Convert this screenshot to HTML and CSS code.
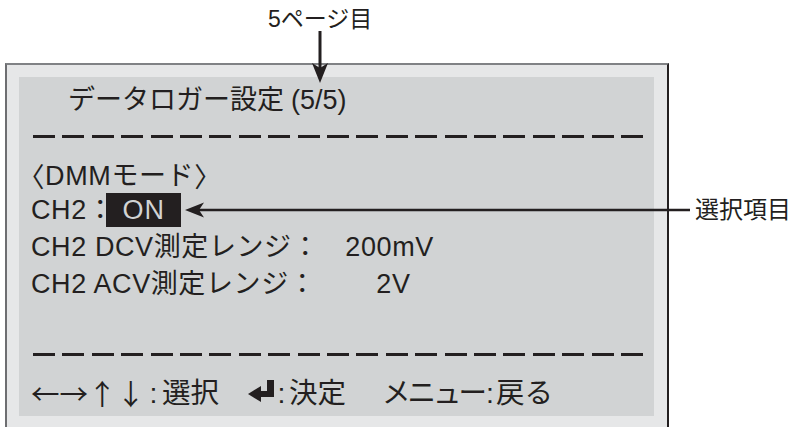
FILE: index.html
```html
<!DOCTYPE html>
<html lang="ja">
<head>
<meta charset="utf-8">
<title>データロガー設定</title>
<link rel="stylesheet" href="styles.css">
</head>
<body>
<div class="page">
  <div class="main">
    <div class="top-label">5ページ目</div>
    <div class="frame">
      <div class="lcd">
        <div class="title">データロガー設定<span class="paren">(5/5)</span></div>
        <div class="rule rule-top"><div class="dash"></div></div>
        <div class="row"><span class="br">〈</span>DMMモード<span class="br">〉</span></div>
        <div class="row row-sel">CH2<span class="fc">：</span><span class="sel">ON</span></div>
        <div class="row row-tall">CH2 DCV測定レンジ：<span class="val val-dc">200mV</span></div>
        <div class="row row-tall">CH2 ACV測定レンジ：<span class="val val-ac">2V</span></div>
        <div class="spacer"></div>
        <div class="rule rule-bottom"><div class="dash"></div></div>
        <div class="footer">
          <span class="arrows">←→↑↓</span><span class="col col1">:</span><span>選択</span>
          <svg class="enter" viewBox="0 0 26 22" width="26" height="22" aria-hidden="true">
            <rect x="19" y="0" width="7" height="17" fill="#231f20"/>
            <rect x="10" y="11" width="16" height="6" fill="#231f20"/>
            <path d="M0 14 L13 6 L13 22 Z" fill="#231f20"/>
          </svg>
          <span class="col col2">:</span><span>決定</span>
          <span class="menu">メニュー</span><span class="col col3">:</span><span>戻る</span>
        </div>
      </div>
    </div>
  </div>
  <div class="side">選択項目</div>
  <svg class="annot" viewBox="0 0 795 427" width="795" height="427" aria-hidden="true">
    <line x1="320" y1="31" x2="320" y2="70" stroke="#231f20" stroke-width="3"/>
    <path d="M320 83 L312 63 L320 68 L328 63 Z" fill="#231f20"/>
    <line x1="199" y1="210" x2="690" y2="210" stroke="#231f20" stroke-width="2.5"/>
    <path d="M185 210 L204 202.5 L199 210 L204 217.5 Z" fill="#231f20"/>
  </svg>
</div>
</body>
</html>
```

FILE: styles.css
```css
html, body {
  margin: 0;
  padding: 0;
  background: #ffffff;
}

body {
  font-family: "Liberation Sans", "Noto Sans CJK JP", sans-serif;
  color: #231f20;
  overflow: hidden;
}

.page {
  position: relative;
  width: 795px;
  height: 427px;
  display: flex;
  overflow: hidden;
}

.main {
  width: 669px;
  flex: none;
}

.top-label {
  height: 63px;
  line-height: 38px;
  font-size: 23px;
  padding-left: 268px;
  box-sizing: border-box;
  white-space: nowrap;
}

.frame {
  margin-left: 5px;
  width: 635px;
  padding: 12px 13px 11px 12px;
  background: #e6e7e8;
  border-left: 2px solid #6d6e71;
  border-top: 2px solid #808285;
  border-right: 2px solid #231f20;
}

.lcd {
  height: 339px;
  box-sizing: border-box;
  padding-top: 6px;
  background: #d1d3d4;
  display: flex;
  flex-direction: column;
  font-size: 27px;
}

.title {
  height: 34px;
  line-height: 34px;
  padding-left: 49px;
  white-space: nowrap;
}

.paren {
  margin-left: 7px;
}

.rule {
  padding-left: 14px;
}

.rule-top {
  padding-top: 18px;
  margin-bottom: 21px;
}

.rule-bottom {
  margin-bottom: 14px;
}

.dash {
  width: 610px;
  height: 3px;
  background: repeating-linear-gradient(to right, #231f20 0 22px, transparent 22px 29.4px);
}

.row {
  height: 34px;
  line-height: 34px;
  padding-left: 12px;
  display: flex;
  align-items: center;
  white-space: nowrap;
  letter-spacing: 0.6px;
  flex: none;
}

.row-sel {
  margin-bottom: 2px;
}

.row-tall {
  height: 37px;
  line-height: 37px;
}

.br {
  font-family: "Noto Sans CJK JP", sans-serif;
  font-feature-settings: "halt";
}

.fc {
  margin-right: -8px;
}

.sel {
  display: inline-block;
  height: 34px;
  line-height: 34px;
  padding: 0 16px 0 16px;
  background: #231f20;
  color: #d1d3d4;
  letter-spacing: 1px;
}

.val-dc {
  margin-left: 26px;
}

.val-ac {
  margin-left: 60px;
}

.spacer {
  flex: 1;
}

.footer {
  height: 46px;
  line-height: 46px;
  padding-left: 12px;
  display: flex;
  align-items: center;
  white-space: nowrap;
  font-size: 28.5px;
  flex: none;
}

.arrows {
  font-family: "Noto Sans CJK JP", sans-serif;
}

.col {
  display: inline-block;
  text-align: center;
}

.col1 {
  width: 17px;
}

.col2 {
  width: 15px;
}

.col3 {
  width: 12px;
}

.enter {
  margin-left: 29px;
  margin-bottom: 4px;
  flex: none;
}

.menu {
  margin-left: 36px;
  letter-spacing: -3px;
}

.side {
  padding-top: 195px;
  padding-left: 26px;
  font-size: 24px;
  line-height: 30px;
  white-space: nowrap;
}

.annot {
  position: absolute;
  left: 0;
  top: 0;
  pointer-events: none;
}
```
